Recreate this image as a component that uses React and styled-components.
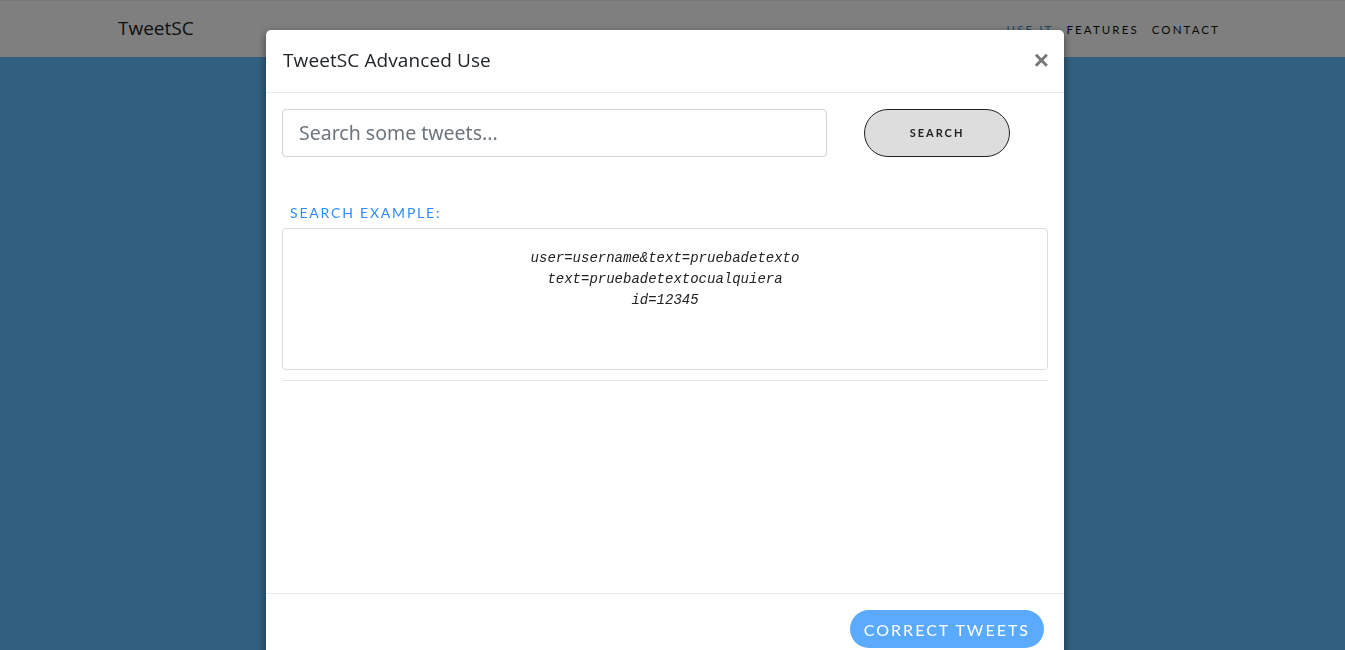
import styled, { createGlobalStyle } from "styled-components";

const GlobalStyle = createGlobalStyle`
  html, body {
    margin: 0;
    padding: 0;
    height: 100%;
    overflow: hidden;
  }
  body {
    font-family: "Lato", "Noto Sans", sans-serif;
    background: #64bffe;
  }
`;

const Page = styled.div`
  min-height: 650px;
  display: flex;
  flex-direction: column;
`;

const Navbar = styled.nav`
  height: 56px;
  background: #ffffff;
  border-top: 1px solid #eeeeee;
  display: flex;
  align-items: center;
  justify-content: space-between;
  padding: 0 125px 0 118px;
`;

const Brand = styled.span`
  font-family: "Open Sans", sans-serif;
  font-size: 19px;
  color: #222222;
  margin-top: -3px;
`;

const NavLinks = styled.div`
  display: flex;
  column-gap: 13px;
  margin-top: 1px;
`;

const NavLink = styled.a`
  font-family: "Lato", sans-serif;
  font-size: 11.5px;
  font-weight: 400;
  letter-spacing: 2.1px;
  color: ${(p) => (p.active ? "#3c8fc7" : "#111111")};
`;

const Hero = styled.section`
  flex: 1;
  background: #64bffe;
`;

const Backdrop = styled.div`
  position: fixed;
  inset: 0;
  background: rgba(0, 0, 0, 0.5);
`;

const Modal = styled.div`
  position: fixed;
  top: 30px;
  left: 266px;
  width: 798px;
  height: 640px;
  background: #ffffff;
  border-radius: 5px 5px 0 0;
  display: flex;
  flex-direction: column;
  box-shadow: 0 3px 9px rgba(0, 0, 0, 0.5);
`;

const ModalHeader = styled.header`
  height: 63px;
  box-sizing: border-box;
  border-bottom: 1px solid #e9ecef;
  display: flex;
  align-items: center;
  justify-content: space-between;
  padding: 0 15px 0 17px;
`;

const ModalTitle = styled.h5`
  margin: 0;
  font-family: "Open Sans", sans-serif;
  font-weight: 400;
  font-size: 19px;
  color: #212529;
  letter-spacing: 0.1px;
  margin-top: -3px;
`;

const CloseButton = styled.button`
  border: none;
  background: none;
  padding: 0;
  font-family: "Liberation Sans", sans-serif;
  font-size: 26px;
  font-weight: 700;
  color: #777777;
  line-height: 1;
  margin-top: -3px;
`;

const ModalBody = styled.div`
  height: 484px;
  padding: 16px 16px 0 16px;
  display: flex;
  flex-direction: column;
`;

const SearchRow = styled.div`
  display: flex;
  align-items: center;
`;

const SearchInput = styled.input`
  width: 545px;
  height: 48px;
  box-sizing: border-box;
  border: 1px solid #ced4da;
  border-radius: 4px;
  padding: 0 16px 2px;
  font-family: "Noto Sans", sans-serif;
  font-size: 19.5px;
  color: #495057;
  &::placeholder {
    color: #6c757d;
  }
`;

const SearchButton = styled.button`
  margin-left: 37px;
  width: 146px;
  height: 48px;
  border: 1px solid #222222;
  border-radius: 24px;
  background: #dddddd;
  font-family: "Lato", sans-serif;
  font-size: 11px;
  font-weight: 700;
  letter-spacing: 2px;
  color: #222222;
  padding-bottom: 2px;
`;

const ExampleLabel = styled.h6`
  margin: 47px 0 7px 8px;
  font-family: "Lato", sans-serif;
  font-weight: 400;
  font-size: 14px;
  letter-spacing: 1.8px;
  color: #2f8cff;
`;

const ExampleBox = styled.div`
  height: 142px;
  box-sizing: border-box;
  border: 1px solid #dddddd;
  border-radius: 4px;
  padding-top: 19px;
  display: flex;
  flex-direction: column;
  align-items: center;
`;

const CodeLine = styled.code`
  font-family: "Liberation Mono", monospace;
  font-style: italic;
  font-size: 14px;
  line-height: 21px;
  color: #222222;
`;

const Divider = styled.hr`
  margin: 10px 0 0;
  border: none;
  border-top: 1px solid #e6e6e6;
`;

const ModalFooter = styled.footer`
  border-top: 1px solid #e9ecef;
  display: flex;
  justify-content: flex-end;
  padding: 16px 20px 0 0;
`;

const PrimaryButton = styled.button`
  height: 38px;
  padding: 0 14px;
  border: none;
  border-radius: 19px;
  background: #5aabff;
  color: #ffffff;
  font-family: "Lato", sans-serif;
  font-size: 16px;
  letter-spacing: 2px;
`;

export default function App() {
  return (
    <>
      <GlobalStyle />
      <Page>
        <Navbar>
          <Brand>TweetSC</Brand>
          <NavLinks>
            <NavLink active>USE IT</NavLink>
            <NavLink>FEATURES</NavLink>
            <NavLink>CONTACT</NavLink>
          </NavLinks>
        </Navbar>
        <Hero />
      </Page>
      <Backdrop />
      <Modal>
        <ModalHeader>
          <ModalTitle>TweetSC Advanced Use</ModalTitle>
          <CloseButton>×</CloseButton>
        </ModalHeader>
        <ModalBody>
          <SearchRow>
            <SearchInput placeholder="Search some tweets..." />
            <SearchButton>SEARCH</SearchButton>
          </SearchRow>
          <ExampleLabel>SEARCH EXAMPLE:</ExampleLabel>
          <ExampleBox>
            <CodeLine>user=username&amp;text=pruebadetexto</CodeLine>
            <CodeLine>text=pruebadetextocualquiera</CodeLine>
            <CodeLine>id=12345</CodeLine>
          </ExampleBox>
          <Divider />
        </ModalBody>
        <ModalFooter>
          <PrimaryButton>CORRECT TWEETS</PrimaryButton>
        </ModalFooter>
      </Modal>
    </>
  );
}
